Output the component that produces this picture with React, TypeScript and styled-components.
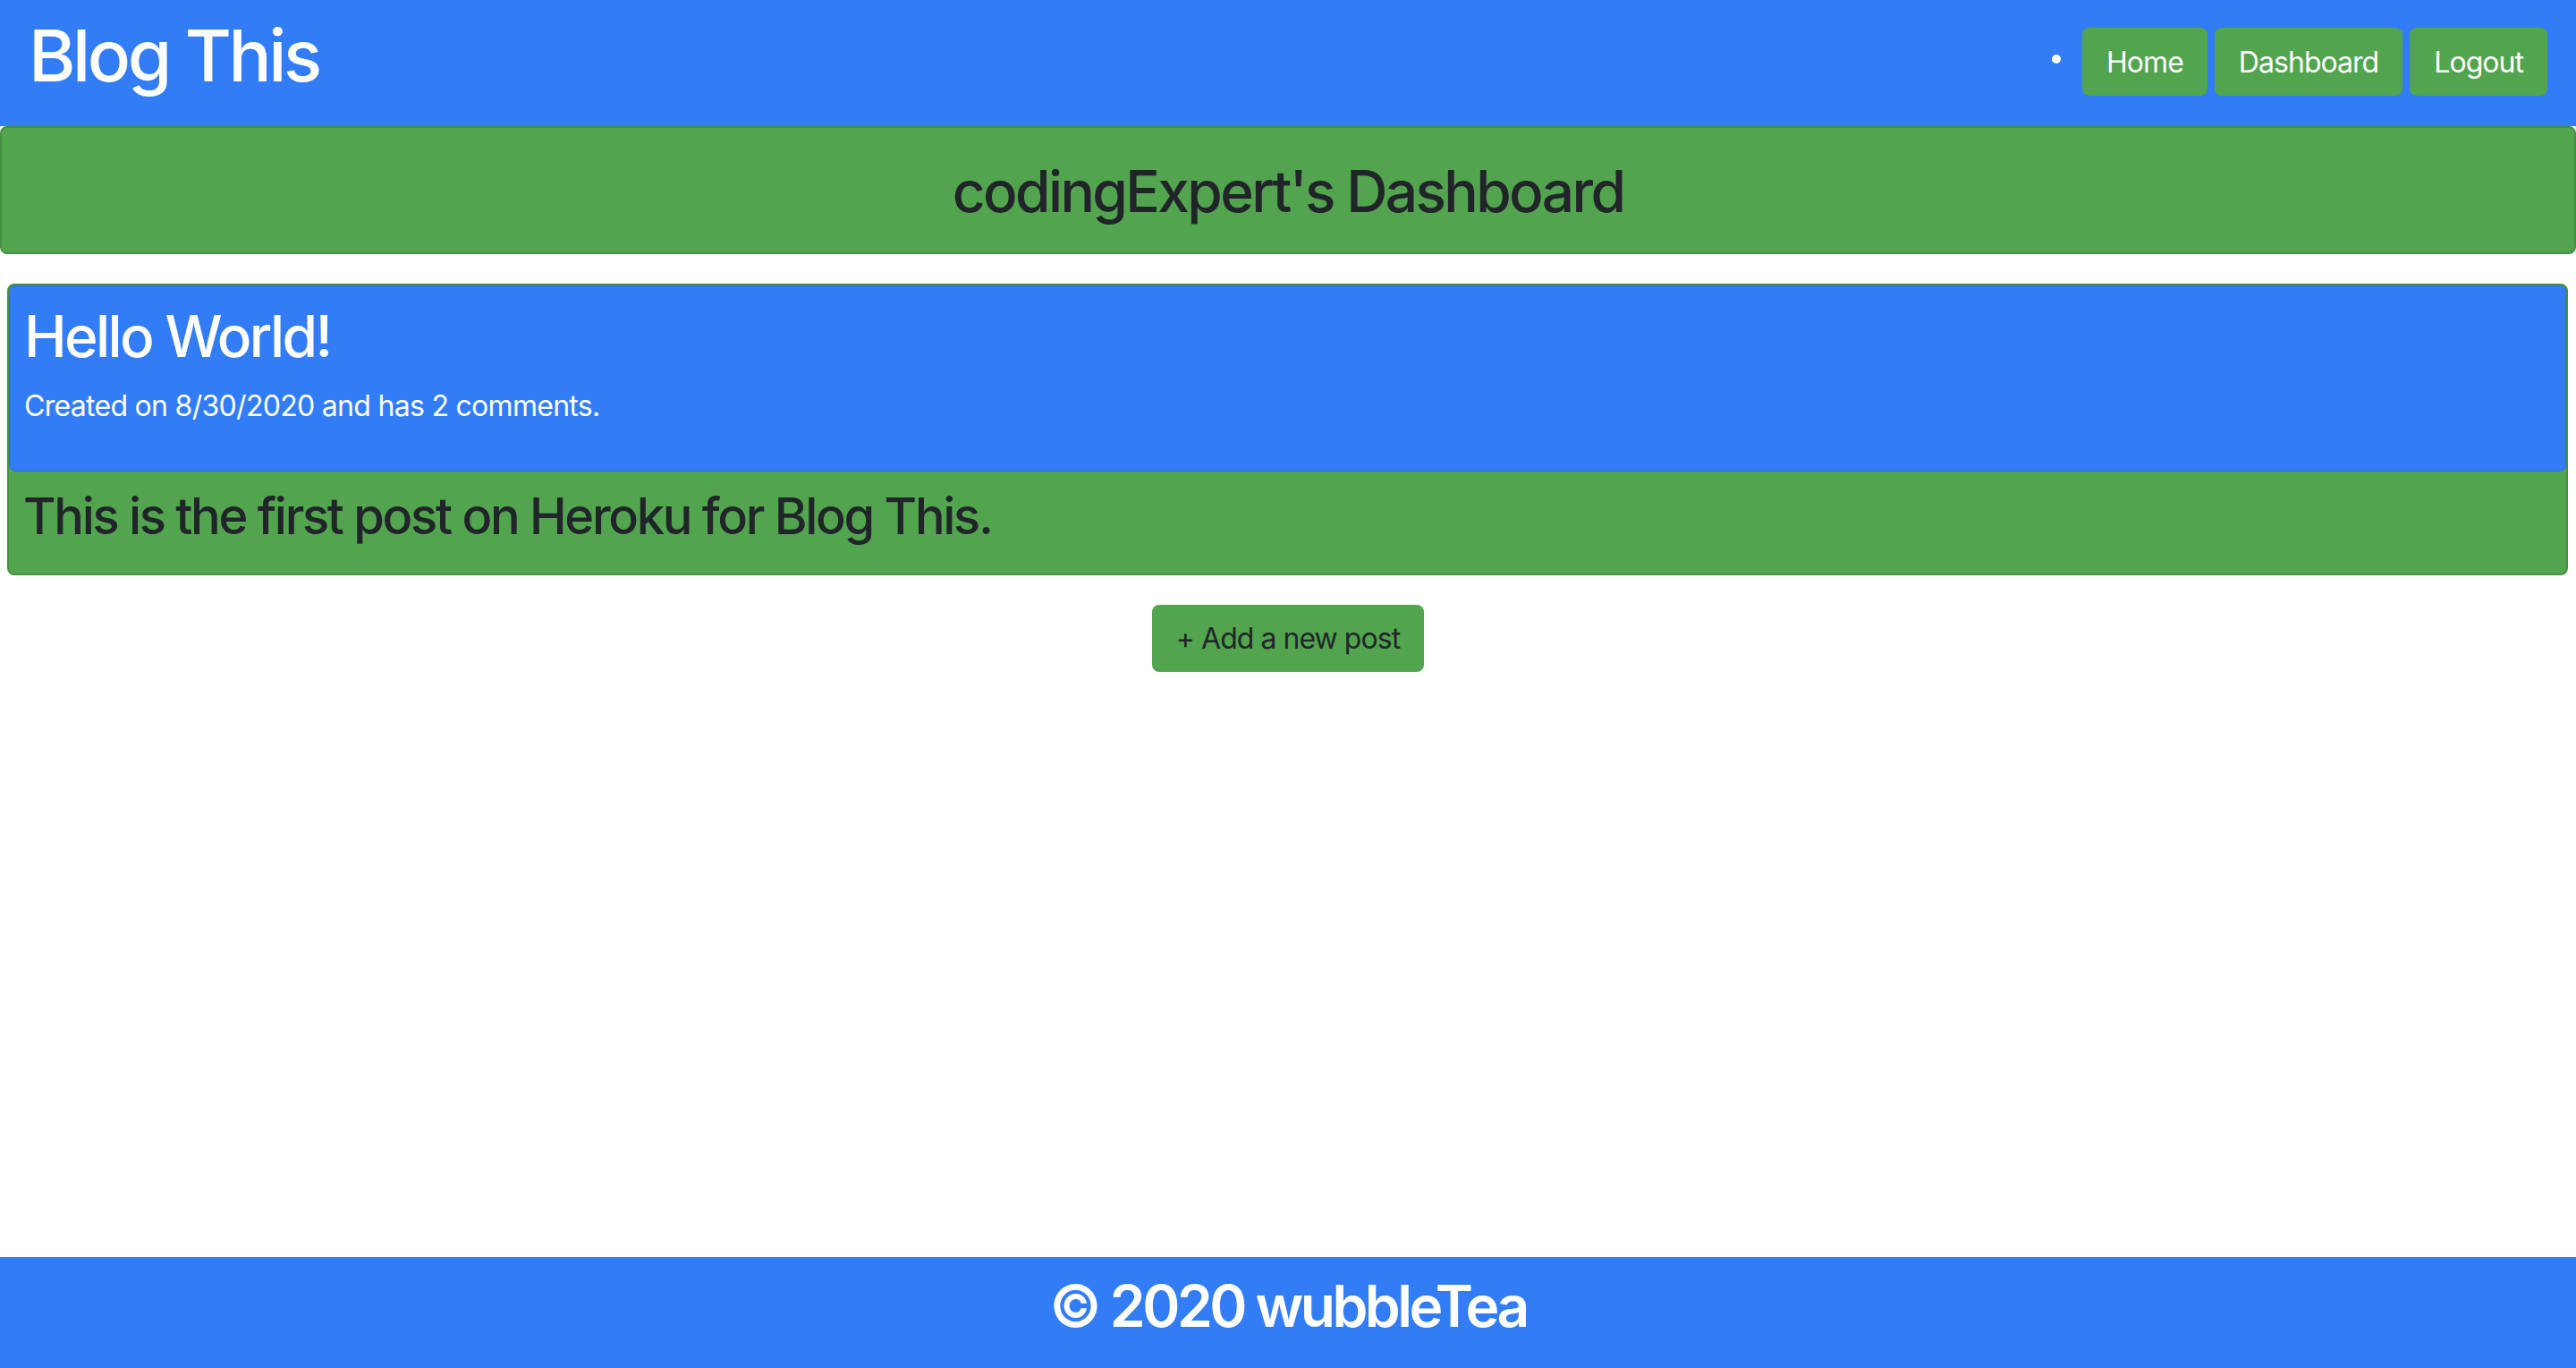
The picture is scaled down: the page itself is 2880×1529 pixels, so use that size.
import React from "react";
import styled, { createGlobalStyle } from "styled-components";

const BLUE = "#327DF6";
const BLUE_EDGE = "#2C6FDC";
const GREEN = "#52A44F";
const GREEN_EDGE = "#478F45";
const INK = "#212529";

const GlobalStyle = createGlobalStyle`
  html, body {
    margin: 0;
    padding: 0;
    background: #ffffff;
  }
  body {
    font-family: Inter, "Liberation Sans", Arial, sans-serif;
    color: ${INK};
    -webkit-font-smoothing: antialiased;
  }
  *, *::before, *::after {
    box-sizing: border-box;
  }
`;

const Page = styled.div`
  min-height: 100vh;
  display: flex;
  flex-direction: column;
`;

const Navbar = styled.header`
  height: 141px;
  background: ${BLUE};
  display: flex;
  justify-content: space-between;
  align-items: flex-start;
  padding: 0 32px;
`;

const Brand = styled.h1`
  margin: 14px 0 0;
  font-size: 80px;
  line-height: 96px;
  font-weight: 500;
  color: #ffffff;
  letter-spacing: -0.043em;
`;

const NavList = styled.ul`
  list-style: none;
  margin: 31px 0 0;
  padding: 0;
  display: flex;
  align-items: flex-start;
  gap: 8px;
`;

const Bullet = styled.li`
  width: 10px;
  height: 10px;
  border-radius: 50%;
  background: #ffffff;
  margin: 30px 16px 0 0;
`;

const NavItem = styled.li`
  display: flex;
`;

const NavButton = styled.a`
  display: inline-flex;
  align-items: center;
  height: 76px;
  padding: 0 27px;
  background: ${GREEN};
  border-radius: 8px;
  color: #ffffff;
  font-size: 32px;
  letter-spacing: -0.03em;
  text-decoration: none;
`;

const TitleBar = styled.section`
  background: ${GREEN};
  border: 2px solid ${GREEN_EDGE};
  border-radius: 8px;
  padding: 33px 0 29px;
  text-align: center;
`;

const TitleText = styled.h2`
  margin: 0;
  font-size: 64px;
  line-height: 1.2;
  font-weight: 500;
  letter-spacing: -0.041em;
  color: ${INK};
`;

const PostCard = styled.article`
  margin: 33px 9px 0 8px;
  background: ${GREEN};
  border: 2px solid ${GREEN_EDGE};
  border-radius: 8px;
`;

const PostHeader = styled.div`
  background: ${BLUE};
  border: 1px solid ${BLUE_EDGE};
  border-radius: 7px;
  padding: 18px 16px 16px;
  color: #ffffff;
`;

const PostTitle = styled.h2`
  margin: 0 0 15px;
  font-size: 64px;
  line-height: 1.2;
  font-weight: 500;
  letter-spacing: -0.041em;
`;

const PostMeta = styled.p`
  margin: 0 0 32px;
  font-size: 32px;
  line-height: 48px;
  letter-spacing: -0.022em;
`;

const PostBody = styled.div`
  padding: 17px 16px 30px;
`;

const PostText = styled.h3`
  margin: 0;
  font-size: 56px;
  line-height: 1.2;
  font-weight: 500;
  letter-spacing: -0.041em;
  color: ${INK};
`;

const ActionRow = styled.div`
  display: flex;
  justify-content: center;
  margin-top: 33px;
`;

const AddButton = styled.button`
  height: 75px;
  padding: 0 27px;
  background: ${GREEN};
  border: none;
  border-radius: 8px;
  color: ${INK};
  font-family: inherit;
  font-size: 32px;
  letter-spacing: -0.03em;
  cursor: pointer;
`;

const Footer = styled.footer`
  margin-top: auto;
  background: ${BLUE};
  padding: 17px 0 30px;
  text-align: center;
`;

const FooterText = styled.p`
  margin: 0;
  font-size: 64px;
  line-height: 1.2;
  font-weight: 600;
  letter-spacing: -0.055em;
  color: #ffffff;
`;

const navLinks = ["Home", "Dashboard", "Logout"];

export default function App() {
  return (
    <>
      <GlobalStyle />
      <Page>
        <Navbar>
          <Brand>Blog This</Brand>
          <NavList>
            <Bullet />
            {navLinks.map((label) => (
              <NavItem key={label}>
                <NavButton href="#">{label}</NavButton>
              </NavItem>
            ))}
          </NavList>
        </Navbar>
        <TitleBar>
          <TitleText>codingExpert's Dashboard</TitleText>
        </TitleBar>
        <PostCard>
          <PostHeader>
            <PostTitle>Hello World!</PostTitle>
            <PostMeta>Created on 8/30/2020 and has 2 comments.</PostMeta>
          </PostHeader>
          <PostBody>
            <PostText>This is the first post on Heroku for Blog This.</PostText>
          </PostBody>
        </PostCard>
        <ActionRow>
          <AddButton>+ Add a new post</AddButton>
        </ActionRow>
        <Footer>
          <FooterText>© 2020 wubbleTea</FooterText>
        </Footer>
      </Page>
    </>
  );
}
